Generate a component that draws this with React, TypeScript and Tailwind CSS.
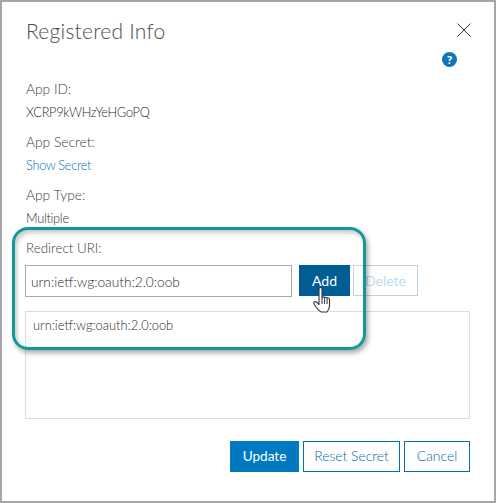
import React from "react";

const font = { fontFamily: "Lato, 'Open Sans', sans-serif" };

const Field: React.FC<{ label: string; value: string; link?: boolean }> = ({ label, value, link }) => (
  <div className="mb-[8px] pl-[1px]">
    <div className="h-[22px] leading-[22px] text-[13.8px] font-light text-[#404040]">{label}</div>
    <div className={`h-[23px] leading-[24px] text-[12.8px] tracking-[-0.3px] font-light ${link ? "text-[#0070b5]" : "text-[#2b2b2b]"}`}>{value}</div>
  </div>
);

const App: React.FC = () => {
  return (
    <div className="relative w-[496px] h-[503px] bg-white border-2 border-[#a6a6a6] overflow-hidden" style={font}>
      <div className="pl-[23px] pr-[24px]">
        <div className="flex justify-between items-start h-[50px]">
          <h1 className="mt-[15px] ml-[1px] text-[21px] leading-[28px] font-light text-[#4c4c4c] tracking-[0.25px]">
            Registered Info
          </h1>
          <svg className="mt-[20px] mr-[-2px]" width="16" height="16" viewBox="0 0 16 16" fill="none">
            <path d="M1.5 1.5 14.5 14.5M14.5 1.5 1.5 14.5" stroke="#333" strokeWidth="1" />
          </svg>
        </div>
        <div className="flex justify-end h-[26px] pr-[13px]">
          <div className="w-[15px] h-[15px] rounded-full bg-[#0f75bc] text-white text-[12px] leading-[15px] font-black text-center">
            ?
          </div>
        </div>
        <Field label="App ID:" value="XCRP9kWHzYeHGoPQ" />
        <Field label="App Secret:" value="Show Secret" link />
        <Field label="App Type:" value="Multiple" />
        <div className="h-[22px] leading-[24px] text-[13.4px] font-light text-[#404040] mt-[-1px] pl-[1px]">Redirect URI:</div>
        <div className="flex mt-[7px] h-[32px]">
          <input
            readOnly
            value="urn:ietf:wg:oauth:2.0:oob"
            className="w-[267px] h-[32px] border border-[#a9a9a9] px-[5px] text-[13.7px] font-light text-[#2b2b2b] outline-none"
          />
          <button className="ml-[7px] w-[51px] h-[31px] bg-[#005e95] text-white text-[14px]">Add</button>
          <button className="ml-[3px] w-[65px] h-[31px] border border-[#b8d6e8] text-[#c0dcec] text-[14px]">
            Delete
          </button>
        </div>
        <div className="mt-[14px] w-[445px] h-[108px] border border-[#dcdcdc] px-[7px] py-[3px] text-[12.9px] font-light leading-[20px] text-[#2b2b2b]">
          urn:ietf:wg:oauth:2.0:oob
        </div>
        <div className="flex justify-end gap-[4px] mt-[22px]">
          <button className="w-[69px] h-[31px] bg-[#0079c1] text-white text-[13.6px]">Update</button>
          <button className="w-[97px] h-[31px] border border-[#0070b5] text-[#0068a8] text-[13.9px] font-light">Reset Secret</button>
          <button className="w-[66px] h-[31px] border border-[#0070b5] text-[#0068a8] text-[13.9px] font-light">Cancel</button>
        </div>
      </div>

      <div className="absolute left-[10px] top-[225px] w-[354px] h-[123px] rounded-[16px] border-[3px] border-[#12979b] shadow-[2px_3px_5px_rgba(0,0,0,0.35),inset_2px_3px_4px_rgba(0,0,0,0.22)] pointer-events-none" />

      <svg className="absolute left-[311px] top-[284px]" width="20" height="28" viewBox="0 0 20 28">
        <path
          d="M6 3c0-2 3-2 3 0v9c0-1.500 2.600-1.500 2.600.2 0-1.300 2.500-1.200 2.500.4 0-1 2.400-.9 2.400.8v6c0 2.800-1 4.800-2.500 6.600H8.500C5.500 25 3.500 22 1.300 18.500-.200 16 2.200 14.600 3.800 16.200L6 18.500V3Z"
          fill="#fff"
          stroke="#2f3347"
          strokeWidth="1.100"
          strokeLinejoin="round"
        />
        <path d="M9 12v6M11.600 12.500v5.500M14.100 13v5" stroke="#2f3347" strokeWidth="1" />
      </svg>
    </div>
  );
};

export default App;
